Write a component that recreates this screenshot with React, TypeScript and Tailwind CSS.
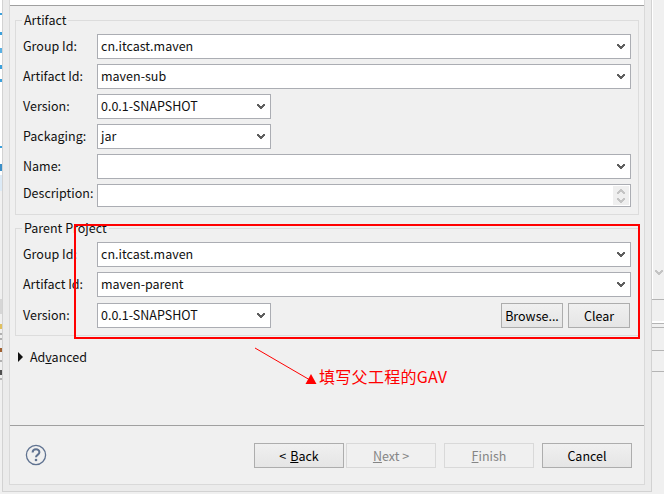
import React from "react";

const FONT = "font-['Noto_Sans_CJK_SC','Noto_Sans',sans-serif] text-[12.5px] leading-[18px] text-[#101010]";

function Chevron({ color = "#5f5f5f" }: { color?: string }) {
  return (
    <svg width="8" height="7" viewBox="0 0 8 7" className="block" shapeRendering="crispEdges">
      <path d="M0 1h2v1h1v1h2v-1h1v-1h2v2h-1v1h-1v1h-1v1h-2v-1h-1v-1h-1v-1h-1z" fill={color} />
    </svg>
  );
}

function Combo({ value, narrow }: { value?: string; narrow?: boolean }) {
  return (
    <div className={`flex h-[25px] items-center justify-between border border-[#abadb3] bg-white pl-[3px] pr-[5px] ${narrow ? "w-[174px]" : "w-full"}`}>
      <span className="relative top-[-1px]">{value}</span>
      <Chevron />
    </div>
  );
}

function Row({ label, children, high }: { label: string; children: React.ReactNode; high?: boolean }) {
  return (
    <div className="flex items-center">
      <div className={`relative w-[74px] shrink-0 ${high ? "top-[-3px]" : "top-[-1px]"}`}>{label}</div>
      <div className="min-w-0 flex-1">{children}</div>
    </div>
  );
}

function Group({ title, children, className }: { title: string; children: React.ReactNode; className?: string }) {
  return (
    <fieldset className={`mx-[5px] w-[624px] border border-[#dcdcdc] pl-[7px] pr-[7px] ${className ?? ""}`}>
      <legend className="ml-[-1px] h-[18px] px-[2px]">{title}</legend>
      {children}
    </fieldset>
  );
}

function WizardButton({ children, disabled, className }: { children: React.ReactNode; disabled?: boolean; className?: string }) {
  return (
    <div
      className={`flex h-[25px] items-center justify-center border ${
        disabled
          ? "border-[#d9d9d9] text-[#858585]"
          : "border-[#adadad] bg-gradient-to-b from-[#f0f0f0] to-[#e5e5e5] text-black"
      } ${className ?? "w-[90px]"}`}
    >
      {children}
    </div>
  );
}

const leftBits: [number, string][] = [
  [13, "#ffffff"], [2, "#3ba0dc"], [17, "#ffffff"], [3, "#3ba0dc"], [13, "#ffffff"], [5, "#58b0e4"], [12, "#ffffff"],
  [4, "#3ba0dc"], [10, "#ffffff"], [3, "#3ba0dc"], [64, "#ffffff"], [2, "#3ba0dc"], [16, "#ffffff"], [7, "#3b8fc8"],
  [4, "#ffffff"], [16, "#dceaf6"], [108, "#f0f0f0"], [15, "#d6d6d6"], [10, "#f0f0f0"], [5, "#e0c060"], [4, "#f0f0f0"],
  [2, "#b0b0b0"], [3, "#f0f0f0"], [2, "#b0b0b0"], [8, "#f0f0f0"], [4, "#a06030"], [8, "#f0f0f0"], [2, "#b0b0b0"],
  [8, "#f0f0f0"], [5, "#505050"], [3, "#f0f0f0"], [2, "#b0b0b0"],
];

export default function App() {
  return (
    <div className={`relative flex h-[494px] w-[664px] overflow-hidden bg-[#f0f0f0] ${FONT}`}>
      {/* neighbouring window, left sliver */}
      <div className="flex h-full w-[2px] shrink-0 flex-col">
        {leftBits.map(([h, c], i) => (
          <div key={i} style={{ height: h, backgroundColor: c }} />
        ))}
      </div>

      {/* dialog frame */}
      <div className="h-[492px] w-[650px] shrink-0 border border-t-0 border-[#d2d2d2] bg-[#ebebeb] pb-[6px] pl-[6px] pr-[6px]">
        <div className="flex h-full w-[636px] flex-col border border-t-0 border-[#d9d9d9] bg-[#f0f0f0]">
          <div className="h-[6px] shrink-0 border-b border-[#a0a0a0] bg-white" />

          <main className="h-[419px] shrink-0 pt-[5px]">
            <Group title="Artifact" className="h-[204px]">
              <div className="flex flex-col gap-[5px] pt-[5px]">
                <Row label="Group Id:"><Combo value="cn.itcast.maven" /></Row>
                <Row label="Artifact Id:"><Combo value="maven-sub" /></Row>
                <Row label="Version:"><Combo value="0.0.1-SNAPSHOT" narrow /></Row>
                <Row label="Packaging:"><Combo value="jar" narrow /></Row>
                <Row label="Name:"><Combo /></Row>
                <Row label="Description:" high>
                  <div className="flex h-[23px] items-stretch justify-end border border-[#abadb3] bg-white p-px">
                    <div className="flex w-[16px] flex-col items-center justify-center gap-[2px] bg-[#efefef]">
                      <div className="rotate-180"><Chevron color="#c4c4c4" /></div>
                      <Chevron color="#c4c4c4" />
                    </div>
                  </div>
                </Row>
              </div>
            </Group>

            <Group title="Parent Project" className="mt-[4px] h-[117px]">
              <div className="flex flex-col pt-[5px]">
                <Row label="Group Id:"><Combo value="cn.itcast.maven" /></Row>
                <div className="mt-[5px]"><Row label="Artifact Id:"><Combo value="maven-parent" /></Row></div>
                <div className="mt-[6px]">
                  <Row label="Version:">
                    <div className="flex items-center">
                      <Combo value="0.0.1-SNAPSHOT" narrow />
                      <div className="ml-auto flex gap-[5px] pr-px">
                        <WizardButton className="w-[62px]">Browse...</WizardButton>
                        <WizardButton className="w-[62px]">Clear</WizardButton>
                      </div>
                    </div>
                  </Row>
                </div>
              </div>
            </Group>

            <div className="mt-[12px] flex items-center pl-[8px]">
              <svg width="5" height="10" viewBox="0 0 5 10" className="block"><path d="M0 0l5 5-5 5z" fill="#111" /></svg>
              <span className="ml-[7px]">Ad<u>v</u>anced</span>
            </div>
          </main>

          <footer className="flex flex-1 items-start justify-between border-t border-[#a0a0a0] pl-[15px] pr-[12px] pt-[17px]">
            <svg width="22" height="22" viewBox="0 0 22 22" className="mt-px block">
              <circle cx="11" cy="11" r="9.6" fill="none" stroke="#5f7290" strokeWidth="1.3" />
              <path d="M7.6 8.6c0-4.4 6.800-4.400 6.800-.3 0 2.600-3.400 2.600-3.400 5" fill="none" stroke="#5f7290" strokeWidth="2" />
              <circle cx="11" cy="16" r="1.3" fill="#5f7290" />
            </svg>
            <div className="flex">
              <WizardButton>&lt; <u className="ml-1">B</u>ack</WizardButton>
              <WizardButton disabled className="ml-[2px] w-[90px]"><u>N</u>ext &gt;</WizardButton>
              <WizardButton disabled className="ml-[8px] w-[90px]"><u>F</u>inish</WizardButton>
              <WizardButton className="ml-[8px] w-[90px]">Cancel</WizardButton>
            </div>
          </footer>
        </div>
      </div>

      {/* neighbouring window, right sliver */}
      <div className="flex-1 bg-[#f0f0f0]">
        <div className="flex h-[299px] items-end justify-end border-l border-white pb-[23px] pr-[1px]">
          <Chevron color="#c4c4c4" />
        </div>
        <div className="h-[1px] bg-[#b4b4b4]" />
        <div className="h-[21px]" />
        <div className="h-[2px] bg-white" />
        <div className="h-[1px] bg-[#b4b4b4]" />
        <div className="h-[3px]" />
        <div className="h-[1px] bg-[#b4b4b4]" />
        <div className="h-[22px]" />
        <div className="h-[1px] bg-[#b4b4b4]" />
        <div className="h-[20px]" />
        <div className="h-[1px] bg-[#b4b4b4]" />
      </div>

      {/* annotation laid over the dialog */}
      <div className="pointer-events-none absolute left-[74px] top-[224px] h-[115px] w-[566px] border-2 border-[#ff0000]" />
      <svg width="664" height="494" className="pointer-events-none absolute left-0 top-0">
        <line x1="255" y1="348" x2="310" y2="380" stroke="#ff0000" strokeWidth="1" />
        <path d="M305.500 384l5.500-10 5.500 10z" fill="#ff0000" />
      </svg>
      <div className="absolute left-[319px] top-[365px] whitespace-nowrap font-['Noto_Sans_CJK_SC','Noto_Sans',sans-serif] text-[16px] leading-[22px] tracking-[0.3px] text-[#ff0000]">
        填写父工程的GAV
      </div>
    </div>
  );
}
